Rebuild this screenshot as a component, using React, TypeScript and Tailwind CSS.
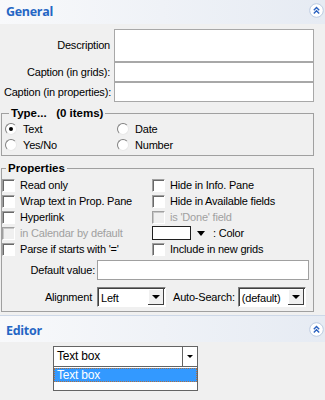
import React from 'react'

function Chevron() {
  return (
    <svg width="15" height="15" viewBox="0 0 15 15">
      <circle cx="7.5" cy="7.5" r="6.8" fill="#ffffff" stroke="#bccbe0" strokeWidth="1" />
      <polyline points="4.8,7.2 7.5,4.5 10.2,7.2" fill="none" stroke="#2b62c0" strokeWidth="1.4" />
      <polyline points="4.8,10.4 7.5,7.7 10.2,10.4" fill="none" stroke="#2b62c0" strokeWidth="1.4" />
    </svg>
  )
}

function Header({ title, className }: { title: string; className: string }) {
  return (
    <div className={`flex justify-between bg-gradient-to-r from-[#f8f9fb] to-[#e6ebf3] pl-[6px] pr-[1px] ${className}`}>
      <span className="text-[12.5px] leading-[18px] font-bold text-[#2566c4] font-['Open_Sans',Arial,sans-serif] tracking-[-0.3px]">{title}</span>
      <Chevron />
    </div>
  )
}

function Radio({ label, checked }: { label: string; checked?: boolean }) {
  return (
    <div className="flex items-center h-[16px]">
      <span className="flex items-center justify-center w-[12px] h-[12px] rounded-full bg-white border border-t-[#808080] border-l-[#808080] border-r-[#e8e8e8] border-b-[#e8e8e8]">
        {checked && <span className="w-[4px] h-[4px] rounded-full bg-black" />}
      </span>
      <span className="ml-[6px]">{label}</span>
    </div>
  )
}

function Check({ label, disabled }: { label: string; disabled?: boolean }) {
  return (
    <div className="flex items-center h-[16px] whitespace-nowrap">
      <span
        className={`w-[13px] h-[13px] shrink-0 border border-t-[#a0a0a0] border-l-[#a0a0a0] border-r-white border-b-white ${
          disabled ? 'bg-[#f0f0f0] shadow-[inset_1px_1px_0_#c8c8c8]' : 'bg-white shadow-[inset_1px_1px_0_#696969]'
        }`}
      />
      <span className={`ml-[5px] ${disabled ? 'text-[#a0a0a0]' : ''}`}>{label}</span>
    </div>
  )
}

function Select({ value, width }: { value: string; width: string }) {
  return (
    <div className={`flex h-[20px] bg-white border border-t-[#808080] border-l-[#808080] border-r-white border-b-white shadow-[inset_1px_1px_0_#404040] ${width}`}>
      <span className="flex-1 pl-[3px] pt-[4px] whitespace-nowrap">{value}</span>
      <span className="flex items-center justify-center w-[16px] mt-[1px] mb-[1px] mr-[1px] bg-[#f0f0f0] shadow-[inset_-1px_-1px_0_#404040,inset_1px_1px_0_#ffffff]">
        <span className="w-0 h-0 border-l-[4px] border-r-[4px] border-t-[4px] border-l-transparent border-r-transparent border-t-black" />
      </span>
    </div>
  )
}

export default function App() {
  return (
    <div className="w-[325px] h-[400px] overflow-hidden bg-[#f0f0f0] text-[11px] leading-[13px] tracking-[-0.2px] text-black font-['Liberation_Sans',Arial,sans-serif]">
      <Header title="General" className="h-[24px] items-start pt-[3px]" />

      <div className="pt-[5px]">
        <div className="flex">
          <span className="w-[112px] pr-[2px] text-right self-center whitespace-nowrap">Description</span>
          <div className="ml-[2px] w-[200px] h-[33px] bg-white border border-[#a8a8a8]" />
        </div>
        <div className="flex">
          <span className="w-[112px] pr-[2px] text-right self-center whitespace-nowrap">Caption (in grids):</span>
          <div className="ml-[2px] w-[200px] h-[20px] bg-white border border-[#a8a8a8]" />
        </div>
        <div className="flex">
          <span className="w-[112px] pr-[1px] text-right self-center whitespace-nowrap">Caption (in properties):</span>
          <div className="ml-[2px] w-[200px] h-[20px] bg-white border border-[#a8a8a8]" />
        </div>
      </div>

      <fieldset className="mt-[5px] ml-[1px] w-[313px] border border-[#a0a0a0] pt-[1px] pb-[2px] pl-[3px]">
        <legend className="ml-[4px] px-[2px] font-bold text-[11.5px] tracking-[0px]">Type...&nbsp;&nbsp; (0 items)</legend>
        <div className="grid grid-cols-[112px_1fr]">
          <Radio label="Text" checked />
          <Radio label="Date" />
          <Radio label="Yes/No" />
          <Radio label="Number" />
        </div>
      </fieldset>

      <fieldset className="mt-[6px] ml-[1px] w-[313px] border border-[#a0a0a0] pt-[2px] pb-[4px]">
        <legend className="ml-[4px] px-[2px] font-bold text-[11.5px] tracking-[0px]">Properties</legend>
        <div className="grid grid-cols-[150px_1fr]">
          <Check label="Read only" />
          <Check label="Hide in Info. Pane" />
          <Check label="Wrap text in Prop. Pane" />
          <Check label="Hide in Available fields" />
          <Check label="Hyperlink" />
          <Check label="is 'Done' field" disabled />
          <Check label="in Calendar by default" disabled />
          <div className="flex items-center h-[16px]">
            <span className="w-[39px] h-[14px] bg-white border border-[#202020]" />
            <span className="ml-[6px] w-0 h-0 border-l-[4px] border-r-[4px] border-t-[5px] border-l-transparent border-r-transparent border-t-black" />
            <span className="ml-[8px]">: Color</span>
          </div>
          <Check label="Parse if starts with '='" />
          <Check label="Include in new grids" />
        </div>
        <div className="flex mt-[3px]">
          <span className="w-[93px] text-right self-center whitespace-nowrap">Default value:</span>
          <div className="ml-[2px] w-[212px] h-[20px] bg-white border border-[#a0a0a0]" />
        </div>
        <div className="flex mt-[7px]">
          <span className="w-[93px] pr-[3px] text-right self-center">Alignment</span>
          <div className="ml-[2px]">
            <Select value="Left" width="w-[69px]" />
          </div>
          <span className="ml-[7px] self-center whitespace-nowrap">Auto-Search:</span>
          <div className="ml-[3px]">
            <Select value="(default)" width="w-[68px]" />
          </div>
        </div>
      </fieldset>

      <Header title="Editor" className="mt-[3px] h-[27px] items-start pt-[6px] border-t border-[#cdd8e8]" />

      <div className="pt-[4px] pl-[53px]">
        <div className="w-[145px] border border-[#646464] bg-white">
          <div className="flex h-[19px]">
            <span className="flex-1 pl-[3px] self-center text-[12px]">Text box</span>
            <span className="flex items-center justify-center w-[15px] border-l border-[#646464]">
              <span className="w-0 h-0 border-l-[3px] border-r-[3px] border-t-[3px] border-l-transparent border-r-transparent border-t-black" />
            </span>
          </div>
        </div>
        <div className="w-[145px] h-[24px] border border-t-0 border-[#646464] bg-white pt-[1px]">
          <div className="h-[14px] bg-[#3399ff] border border-dotted border-[#b07040] text-white text-[12px] leading-[12px] pl-[2px]">Text box</div>
        </div>
      </div>
    </div>
  )
}
